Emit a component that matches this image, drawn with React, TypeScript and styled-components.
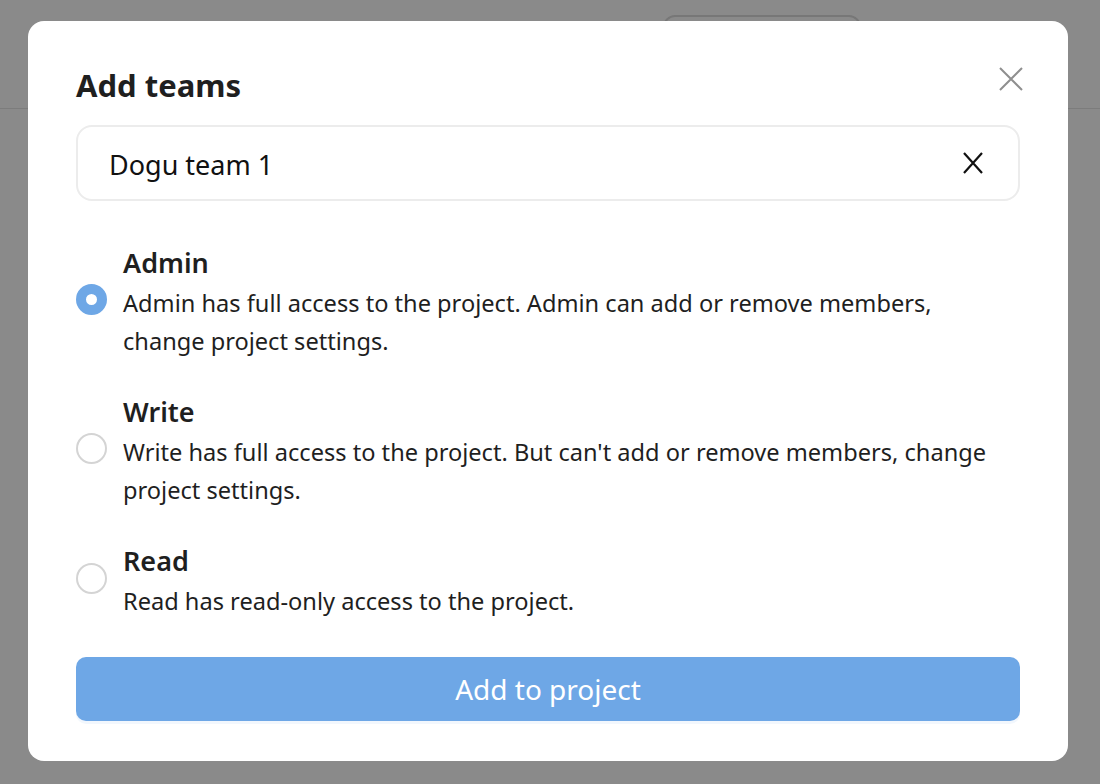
import React, { useState } from "react";
import styled, { createGlobalStyle } from "styled-components";

const GlobalStyle = createGlobalStyle`
  html, body {
    margin: 0;
    padding: 0;
    background: #ffffff;
    font-family: "Noto Sans", "Open Sans", sans-serif;
  }
  * { box-sizing: border-box; }
`;

const Page = styled.div`
  width: 1100px;
  height: 784px;
  position: relative;
  overflow: hidden;
  background: #ffffff;
`;

const Header = styled.header`
  height: 109px;
  border-bottom: 1px solid #e6e6e6;
  display: flex;
  justify-content: flex-end;
  align-items: flex-start;
  padding: 15px 239px 0 0;
`;

const GhostButton = styled.div`
  width: 198px;
  height: 48px;
  border: 2px solid #dcdcdc;
  border-radius: 12px;
`;

const Overlay = styled.div`
  position: absolute;
  inset: 0;
  background: rgba(0, 0, 0, 0.46);
  display: flex;
  align-items: center;
  justify-content: center;
  padding: 0 4px 2px 0;
`;

const Modal = styled.div`
  width: 1040px;
  height: 740px;
  background: #ffffff;
  border-radius: 16px;
  padding: 44px 48px 40px;
  display: flex;
  flex-direction: column;
`;

const TitleRow = styled.div`
  display: flex;
  justify-content: space-between;
  align-items: center;
  height: 40px;
`;

const Title = styled.h2`
  margin: 0;
  font-size: 31px;
  line-height: 40px;
  font-weight: 700;
  color: #1f1f1f;
`;

const CloseButton = styled.button`
  border: none;
  background: none;
  padding: 0;
  margin-right: -3px;
  margin-top: -13px;
  width: 24px;
  height: 24px;
  display: flex;
  cursor: pointer;
`;

const InputBox = styled.div`
  margin-top: 20px;
  height: 76px;
  border: 2px solid #ececec;
  border-radius: 16px;
  display: flex;
  align-items: center;
  padding: 0 34px 0 31px;
`;

const TeamText = styled.span`
  flex: 1;
  font-size: 27px;
  color: #111111;
  margin-top: 2px;
`;

const ClearButton = styled.button`
  border: none;
  background: none;
  padding: 0;
  width: 22px;
  height: 22px;
  display: flex;
  cursor: pointer;
`;

const Options = styled.div`
  margin-top: 41px;
  display: flex;
  flex-direction: column;
  gap: 31px;
`;

const Option = styled.label`
  display: flex;
  align-items: center;
  gap: 16px;
  padding-right: 16px;
  cursor: pointer;
`;

const Radio = styled.span<{ $checked: boolean }>`
  flex: none;
  width: 31px;
  height: 31px;
  margin-top: -3px;
  border-radius: 50%;
  border: ${(p) => (p.$checked ? "10px solid #6ea7e6" : "2px solid #d4d4d4")};
  background: #ffffff;
`;

const OptionText = styled.div`
  display: flex;
  flex-direction: column;
`;

const OptionTitle = styled.span`
  font-size: 27px;
  line-height: 42px;
  font-weight: 600;
  color: #1f1f1f;
`;

const OptionDesc = styled.span`
  font-size: 23.6px;
  line-height: 38px;
  color: #1f1f1f;
`;

const SubmitButton = styled.button`
  margin-top: 37px;
  height: 64px;
  width: 100%;
  border: none;
  border-radius: 10px;
  background: #6ea7e6;
  color: #ffffff;
  font-family: inherit;
  font-size: 28px;
  box-shadow: 0 3px 0 #f2f7fd;
  cursor: pointer;
`;

const roles = [
  {
    key: "admin",
    title: "Admin",
    desc: "Admin has full access to the project. Admin can add or remove members, change project settings.",
  },
  {
    key: "write",
    title: "Write",
    desc: "Write has full access to the project. But can't add or remove members, change project settings.",
  },
  {
    key: "read",
    title: "Read",
    desc: "Read has read-only access to the project.",
  },
];

export default function App() {
  const [role, setRole] = useState("admin");
  return (
    <>
      <GlobalStyle />
      <Page>
        <Header>
          <GhostButton />
        </Header>
        <Overlay>
          <Modal>
            <TitleRow>
              <Title>Add teams</Title>
              <CloseButton aria-label="Close">
                <svg width="24" height="24" viewBox="0 0 24 24">
                  <path d="M1 1 L23 23 M23 1 L1 23" stroke="#8f8f8f" strokeWidth="2" fill="none" />
                </svg>
              </CloseButton>
            </TitleRow>
            <InputBox>
              <TeamText>Dogu team 1</TeamText>
              <ClearButton aria-label="Clear">
                <svg width="22" height="22" viewBox="0 0 22 22">
                  <path d="M2 1 L20 21 M20 1 L2 21" stroke="#111" strokeWidth="2.2" fill="none" />
                </svg>
              </ClearButton>
            </InputBox>
            <Options>
              {roles.map((r) => (
                <Option key={r.key} onClick={() => setRole(r.key)}>
                  <Radio $checked={role === r.key} />
                  <OptionText>
                    <OptionTitle>{r.title}</OptionTitle>
                    <OptionDesc>{r.desc}</OptionDesc>
                  </OptionText>
                </Option>
              ))}
            </Options>
            <SubmitButton>Add to project</SubmitButton>
          </Modal>
        </Overlay>
      </Page>
    </>
  );
}
